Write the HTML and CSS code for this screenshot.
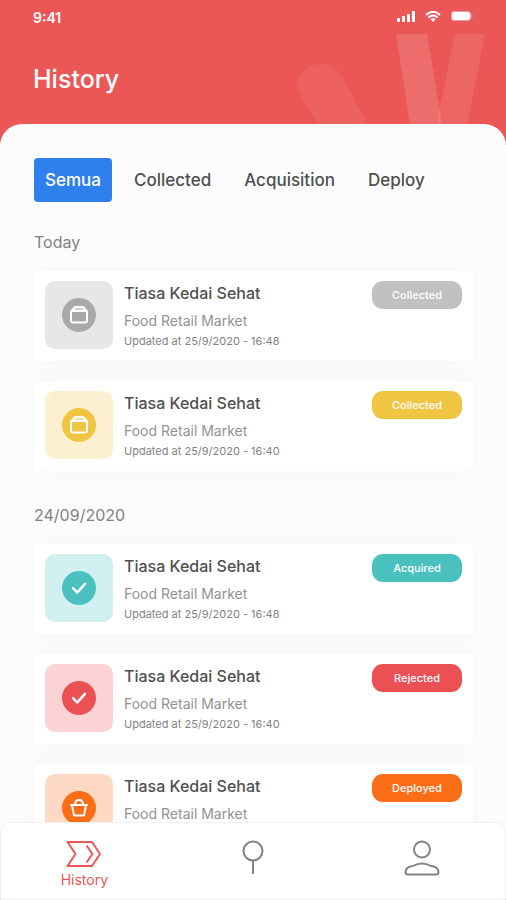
FILE: index.html
```html
<!DOCTYPE html>
<html lang="id">
<head>
<meta charset="utf-8">
<meta name="viewport" content="width=device-width, initial-scale=1">
<title>History</title>
<link rel="stylesheet" href="styles.css">
</head>
<body>
<svg width="0" height="0" class="defs" aria-hidden="true">
  <symbol id="box" viewBox="0 0 34 34">
    <path d="M10 13h14a1 1 0 0 1 1 1v8.500a2 2 0 0 1-2 2H11a2 2 0 0 1-2-2V14a1 1 0 0 1 1-1z"/>
    <path d="M9.500 13l3.500-4h8l3.500 4z" fill="#fff" fill-opacity=".5"/>
  </symbol>
  <symbol id="check" viewBox="0 0 34 34">
    <path d="M11 17.200l4.200 4.300L23 12.800" stroke-width="2.500"/>
  </symbol>
  <symbol id="basket" viewBox="0 0 34 34">
    <path d="M9 14h16M10 14l2 10.500h10L24 14M12.500 13.800c.5-2.500 1.500-4 3-4.800h3c1.500.8 2.500 2.300 3 4.800"/>
  </symbol>
</svg>
<div class="app">
  <header class="header">
    <svg class="rays" width="200" height="150" viewBox="0 0 200 150" aria-hidden="true">
      <path d="M-2 88C-5 74 6 65 20 64q14 0 22 12l26 49H18L2 98z" opacity=".06"/>
      <path d="M96 34h31l14 83v8h-31z" opacity=".13"/>
      <path d="M155 34h30l-18 91h-29v-8z" opacity=".09"/>
    </svg>
    <div class="status">
      <span>9:41</span>
      <div class="status-icons">
        <svg width="18" height="12" viewBox="0 0 18 12" aria-hidden="true"><rect y="7" width="3" height="4" rx="1"/><rect x="5" y="5" width="3" height="6" rx="1"/><rect x="10" y="3" width="3" height="8" rx="1"/><rect x="15" width="3" height="11" rx="1"/></svg>
        <svg width="16" height="12" viewBox="0 0 16 12" aria-hidden="true"><g fill="none" stroke="#fff" stroke-width="2"><path d="M1 4q7-6.500 14 0M3.500 6.500q4.500-4 9 0"/></g><path d="M5.500 8.300q2.500-2 5 0L8 11z"/></svg>
        <svg width="22" height="12" viewBox="0 0 22 12" aria-hidden="true"><rect x="0" y="0" width="20" height="10" rx="3" opacity=".4"/><rect x="1" y="1" width="18" height="8" rx="2"/><path d="M20.500 3q2 2 0 4z" opacity=".6"/></svg>
      </div>
    </div>
    <h1>History</h1>
  </header>

  <main class="panel">
    <div class="tabs">
      <button class="tab active" type="button">Semua</button>
      <button class="tab" type="button">Collected</button>
      <button class="tab" type="button">Acquisition</button>
      <button class="tab" type="button">Deploy</button>
    </div>

    <section class="group">
      <h2>Today</h2>
      <article class="card grey">
        <div class="thumb"><svg><use href="#box"/></svg></div>
        <div class="info"><h3>Tiasa Kedai Sehat</h3><p>Food Retail Market</p><small>Updated at 25/9/2020 - 16:48</small></div>
        <span class="badge">Collected</span>
      </article>
      <article class="card yellow">
        <div class="thumb"><svg><use href="#box"/></svg></div>
        <div class="info"><h3>Tiasa Kedai Sehat</h3><p>Food Retail Market</p><small>Updated at 25/9/2020 - 16:40</small></div>
        <span class="badge">Collected</span>
      </article>
    </section>

    <section class="group">
      <h2>24/09/2020</h2>
      <article class="card teal">
        <div class="thumb"><svg><use href="#check"/></svg></div>
        <div class="info"><h3>Tiasa Kedai Sehat</h3><p>Food Retail Market</p><small>Updated at 25/9/2020 - 16:48</small></div>
        <span class="badge">Acquired</span>
      </article>
      <article class="card red">
        <div class="thumb"><svg><use href="#check"/></svg></div>
        <div class="info"><h3>Tiasa Kedai Sehat</h3><p>Food Retail Market</p><small>Updated at 25/9/2020 - 16:40</small></div>
        <span class="badge">Rejected</span>
      </article>
      <article class="card orange">
        <div class="thumb"><svg><use href="#basket"/></svg></div>
        <div class="info"><h3>Tiasa Kedai Sehat</h3><p>Food Retail Market</p></div>
        <span class="badge">Deployed</span>
      </article>
    </section>
  </main>

  <nav class="nav">
    <a class="current" href="#history">
      <svg width="36" height="28" viewBox="0 0 36 28" aria-hidden="true"><path d="M1.500 2H26l8 12-8 12H1.500l8-12zM20.500 5.500l6 8.500-6 8.500"/></svg>
      <span>History</span>
    </a>
    <a href="#places" aria-label="Places">
      <svg width="24" height="36" viewBox="0 0 24 36" aria-hidden="true"><circle cx="12" cy="11" r="9.500"/><path d="M12 20.500V34"/></svg>
    </a>
    <a href="#profile" aria-label="Profile">
      <svg width="36" height="36" viewBox="0 0 36 36" aria-hidden="true"><circle cx="18" cy="9.500" r="8"/><path d="M4 34.500h28q2.500 0 2.500-2.500c0-3.500-3.500-5.500-7.500-6q-4.500-2.500-9-2.500t-9 2.500c-4 .5-7.500 2.500-7.500 6q0 2.500 2.500 2.500z"/></svg>
    </a>
  </nav>
</div>
</body>
</html>
```
FILE: styles.css
```css
* { box-sizing: border-box; }
body, h1, h2, h3, p { margin: 0; }
body { font-family: Inter, "Liberation Sans", sans-serif; color: #4f4f4f; background: #fcfcfc; }
.defs { position: absolute; }

.app { display: flex; flex-direction: column; height: 100vh; overflow: hidden; background: #eb5757; }

.header { position: relative; flex: none; padding: 7px 33px 29px; color: #fff; }
.rays { position: absolute; top: 0; right: 6px; fill: #fff; overflow: visible; }
.status { display: flex; align-items: center; justify-content: space-between; height: 20px; font-size: 14px; font-weight: 600; }
.status-icons { display: flex; gap: 10px; fill: #fff; }
.header h1 { margin-top: 36px; font-size: 25px; line-height: 32px; font-weight: 500; }

.panel { position: relative; flex: 1; min-height: 0; overflow-y: auto; scrollbar-width: none; padding: 34px 33px 28px 34px; background: #fcfcfc; border-radius: 22px 22px 0 0; }
.tabs { display: flex; gap: 11px; margin-bottom: 30px; }
.tab { padding: 0 11px; height: 44px; border: 0; border-radius: 4px; background: none; color: #4f4f4f; font: 500 17px Inter, "Liberation Sans", sans-serif; }
.tab.active { background: #2f80ed; color: #fff; }

.group { display: flex; flex-direction: column; gap: 20px; margin-bottom: 34px; }
.group h2 { margin-bottom: -1px; font-size: 16px; line-height: 20px; font-weight: 400; color: #828282; }

.card { display: flex; align-items: flex-start; gap: 11px; padding: 10px 11px; min-height: 90px; background: #fff; border-radius: 4px; box-shadow: 0 0 24px rgba(0, 0, 0, 0.03); }
.thumb { display: grid; place-items: center; flex: none; width: 68px; height: 68px; border-radius: 10px; background: var(--tint); }
.thumb svg { width: 34px; height: 34px; border-radius: 50%; background: var(--tone); fill: none; stroke: #fff; stroke-width: 2; stroke-linecap: round; stroke-linejoin: round; }
.info { flex: 1; min-width: 0; }
.info h3 { margin-bottom: 6px; font-size: 16px; line-height: 24px; font-weight: 500; color: #4f4f4f; }
.info p { font-size: 14px; line-height: 20px; color: #929292; }
.info small { display: block; font-size: 11px; line-height: 20px; color: #828282; }
.badge { flex: none; width: 90px; border-radius: 11px; background: var(--pill, var(--tone)); color: #fff; font-size: 11px; line-height: 28px; font-weight: 500; text-align: center; }

.grey { --tone: #a9a9a9; --tint: #e7e7e7; --pill: #c1c1c1; }
.yellow { --tone: #f0c541; --tint: #fcf0d0; }
.teal { --tone: #4bc1bf; --tint: #d2f0ef; }
.red { --tone: #eb5054; --tint: #fbd3d5; }
.orange { --tone: #fc6d18; --tint: #fedac5; }

.nav { position: relative; flex: none; display: grid; grid-template-columns: repeat(3, 1fr); gap: 2px; height: 78px; margin-top: -10px; padding-top: 17px; background: #fff; border: 1px solid #f1f1f1; border-radius: 10px 10px 0 0; }
.nav a { display: flex; flex-direction: column; align-items: center; color: #828282; text-decoration: none; font-size: 14px; line-height: 20px; }
.nav a.current { color: #eb5757; }
.nav span { margin-top: 2px; }
.nav svg { fill: none; stroke: currentColor; stroke-width: 2; stroke-linejoin: round; }
```
